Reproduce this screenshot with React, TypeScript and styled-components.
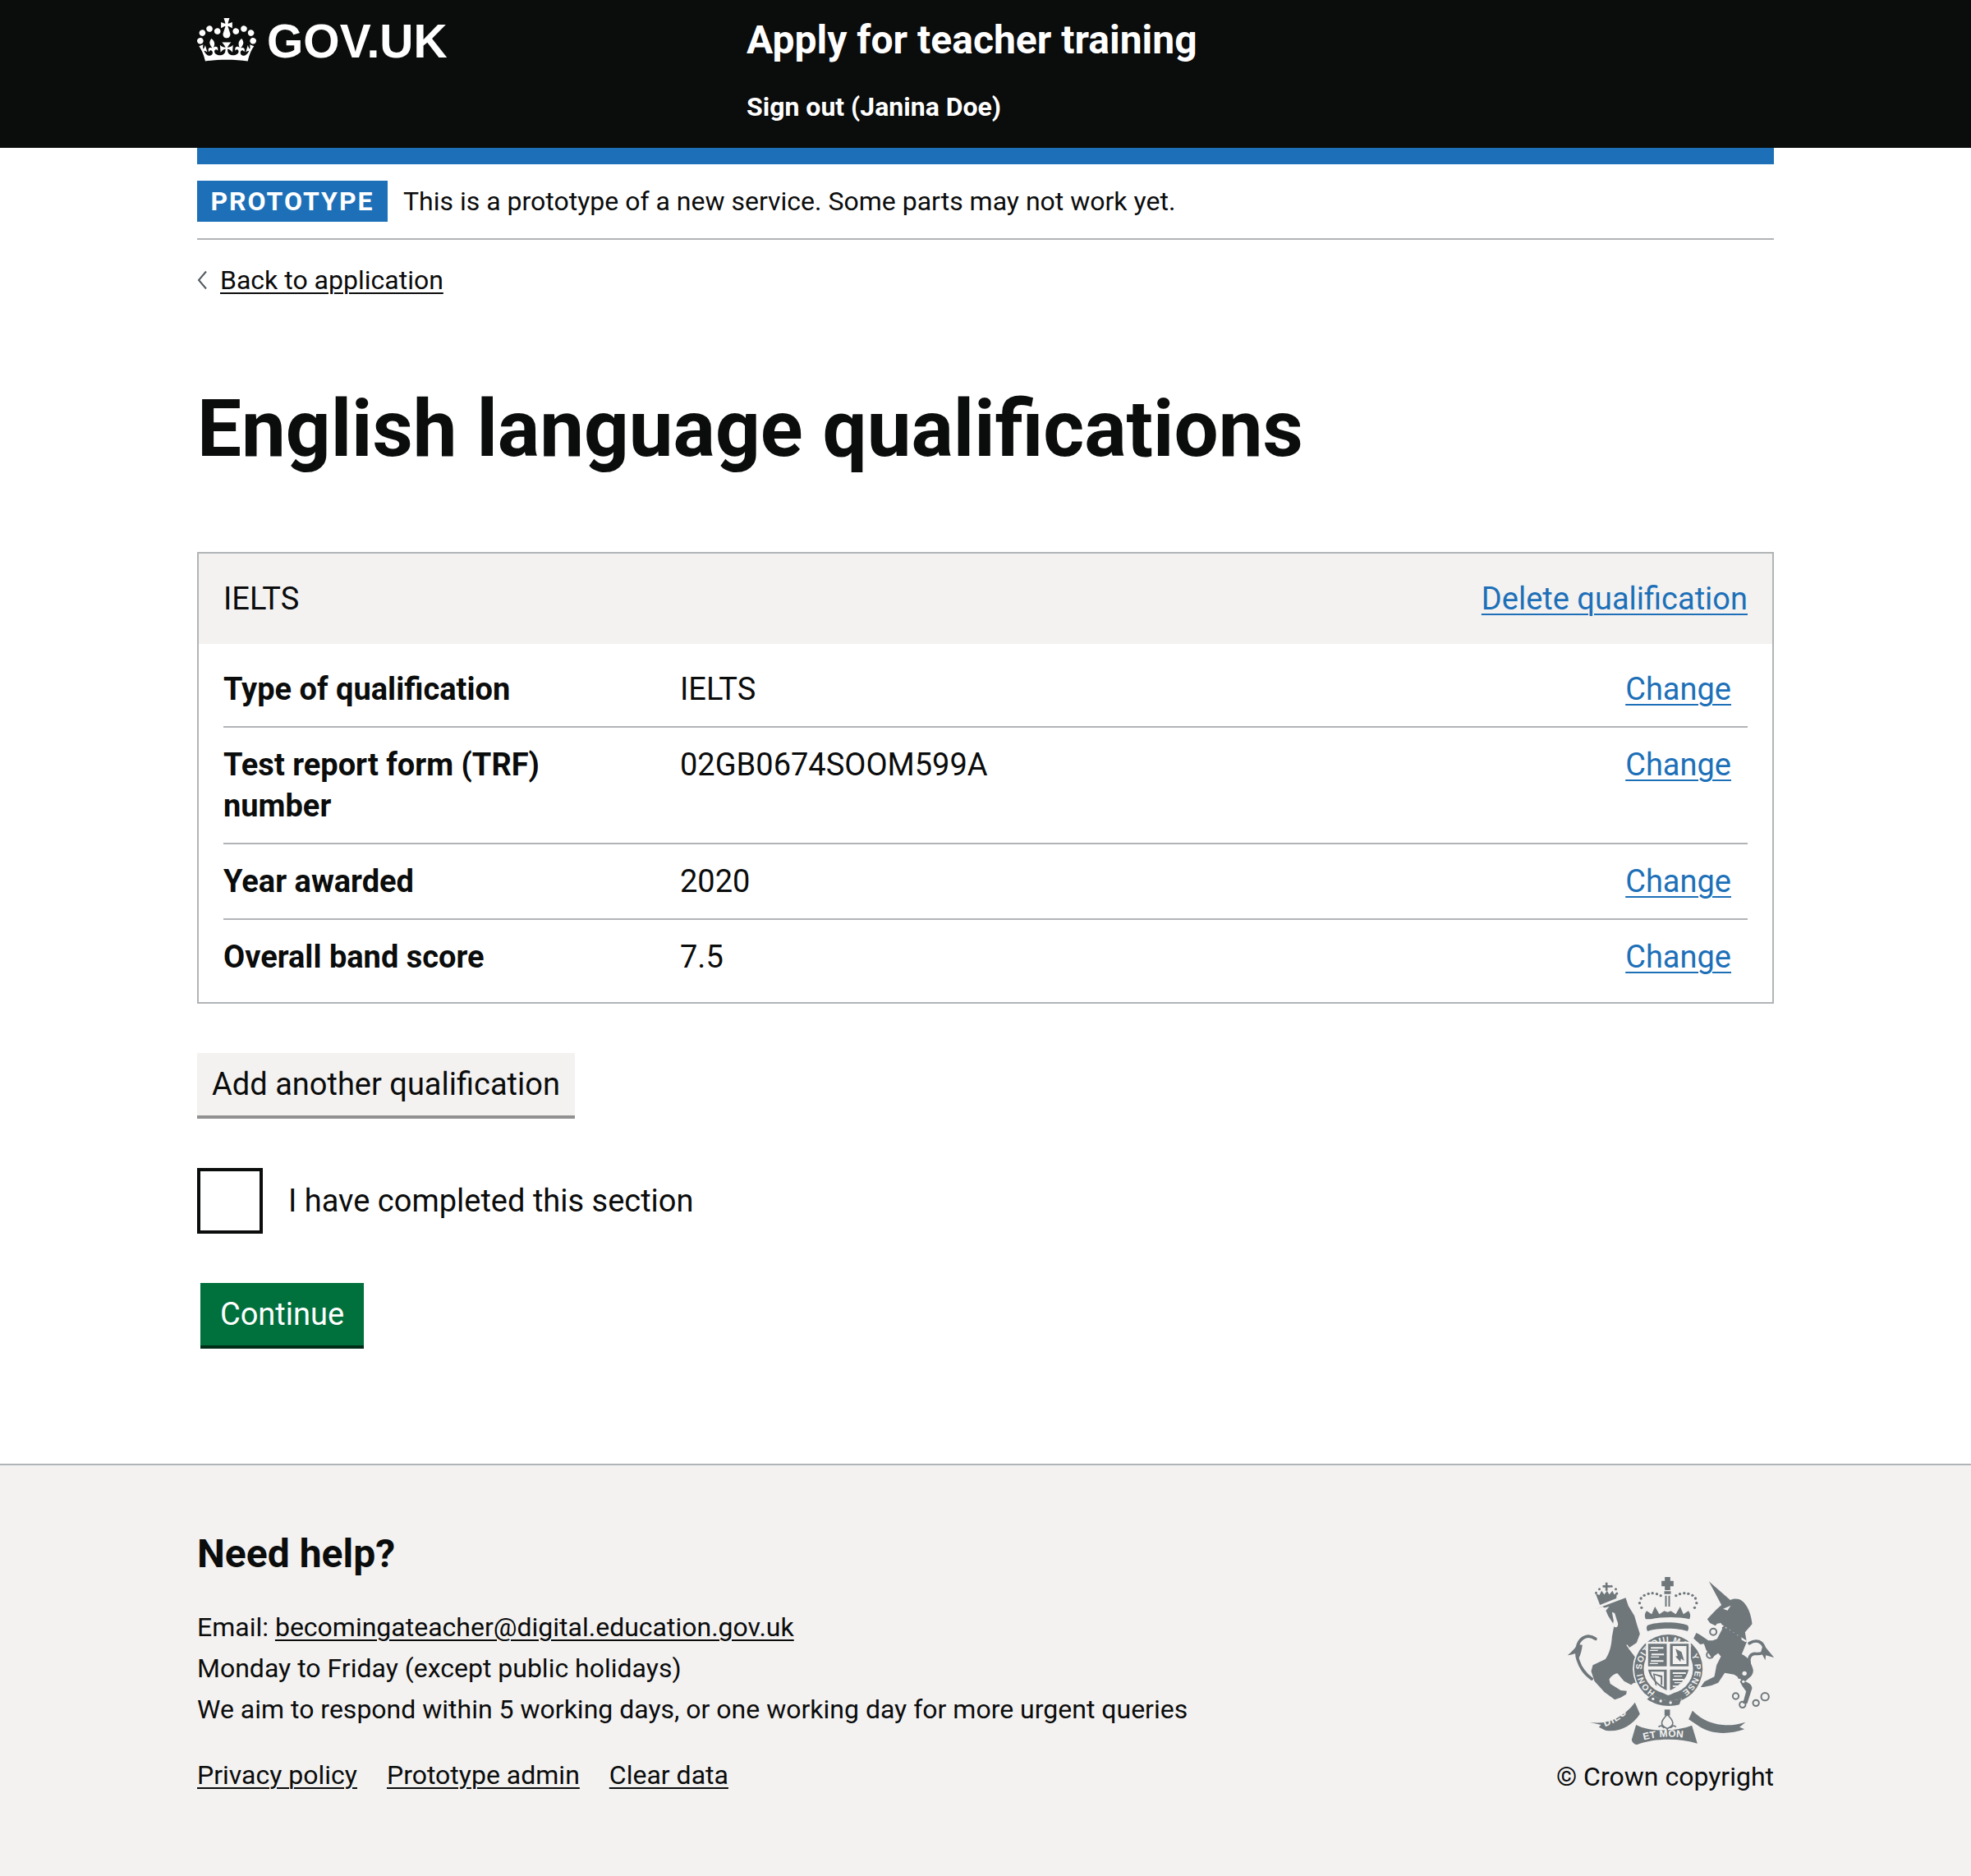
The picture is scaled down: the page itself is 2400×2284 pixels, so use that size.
import React from "react";
import styled, { createGlobalStyle } from "styled-components";

const FONT = `Roboto, "Noto Sans", Arial, sans-serif`;
const Global = createGlobalStyle`
  html, body { margin: 0; padding: 0; background: #fff; }
  body { font-family: ${FONT}; color: #0b0c0c; }
  * { box-sizing: border-box; }
`;
const Page = styled.div`height: 2284px; display: flex; flex-direction: column; overflow: hidden;`;
const Header = styled.header`height: 180px; background: #0b0c0c; color: #fff; flex: none;`;
const HeaderInner = styled.div`width: 1920px; margin: 0 auto; display: flex;`;
const LogoBlock = styled.div`width: 669px; display: flex; align-items: flex-start; padding-top: 22px; gap: 13px;`;
const Wordmark = styled.span`font-family: "Liberation Sans", Arial, sans-serif; font-weight: 700; font-size: 57px; line-height: 54px; margin-top: 1px;`;
const ServiceBlock = styled.div`display: flex; flex-direction: column; padding-top: 19px;`;
const ServiceName = styled.div`font-size: 48px; font-weight: 700; line-height: 60px;`;
const SignOut = styled.div`font-size: 32px; font-weight: 700; line-height: 40px; margin-top: 31px;`;
const Container = styled.div`width: 1920px; margin: 0 auto; flex: none;`;
const Phase = styled.div`border-top: 20px solid #1d70b8; border-bottom: 2px solid #b1b4b6; padding: 20px 0; display: flex; align-items: center; gap: 19px; height: 112px;`;
const Tag = styled.strong`background: #1d70b8; color: #fff; font-size: 32px; line-height: 50px; height: 50px; width: 232px; text-align: center; letter-spacing: 2px; font-weight: 700;`;
const PhaseText = styled.span`font-size: 32px; line-height: 50px;`;
const Back = styled.div`display: flex; align-items: center; gap: 16px; margin-top: 24px; height: 50px;`;
const BackLink = styled.a`font-size: 32px; line-height: 50px; color: #0b0c0c; text-decoration: underline; text-decoration-thickness: 2px; text-underline-offset: 4px;`;
const Title = styled.h1`font-size: 96px; line-height: 120px; font-weight: 700; margin: 96px 0 90px;`;
const Card = styled.section`border: 2px solid #b1b4b6;`;
const CardHead = styled.div`background: #f3f2f1; height: 110px; padding: 0 30px; display: flex; align-items: center; justify-content: space-between; font-size: 38px; line-height: 50px;`;
const CardBody = styled.dl`margin: 0; padding: 10px 30px;`;
const Row = styled.div`display: grid; grid-template-columns: 556px 1fr auto; padding: 20px 0; border-bottom: 2px solid #b1b4b6; &:last-child { border-bottom: none; }`;
const Key = styled.dt`font-size: 38px; line-height: 50px; font-weight: 700;`;
const Val = styled.dd`font-size: 38px; line-height: 50px; margin: 0;`;
const Action = styled.dd`margin: 0; padding-right: 20px;`;
const BlueLink = styled.a`font-size: 38px; line-height: 50px; color: #1d70b8; text-decoration: underline; text-decoration-thickness: 2px; text-underline-offset: 5px;`;
const AddButton = styled.button`display: block; margin-top: 60px; height: 80px; width: 460px; border: none; border-bottom: 4px solid #929191; background: #f3f2f1; color: #0b0c0c; font: 400 38px/50px ${FONT}; padding: 0;`;
const CheckRow = styled.label`display: flex; align-items: center; gap: 31px; margin-top: 60px; font-size: 38px; line-height: 50px;`;
const Box = styled.span`width: 80px; height: 80px; border: 4px solid #0b0c0c; background: #fff; flex: none;`;
const ContinueButton = styled.button`display: block; margin: 60px 0 140px 4px; width: 199px; height: 80px; border: none; border-bottom: 4px solid #002d18; background: #00703c; color: #fff; font: 400 38px/50px ${FONT}; padding: 0;`;
const Footer = styled.footer`flex: 1; background: #f3f2f1; border-top: 2px solid #b1b4b6;`;
const FooterInner = styled.div`width: 1920px; margin: 0 auto; padding-top: 78px; display: flex; justify-content: space-between;`;
const HelpCol = styled.div`display: flex; flex-direction: column;`;
const HelpTitle = styled.h2`font-size: 48px; line-height: 60px; font-weight: 700; margin: 0 0 34px;`;
const HelpLine = styled.p`font-size: 32px; line-height: 50px; margin: 0;`;
const DarkLink = styled.a`color: #0b0c0c; font-size: 32px; line-height: 50px; text-decoration: underline; text-decoration-thickness: 2px; text-underline-offset: 4px;`;
const FootLinks = styled.div`display: flex; gap: 36px; margin-top: 30px;`;
const ArmsCol = styled.div`display: flex; flex-direction: column; align-items: flex-end; padding-top: 58px;`;
const Copy = styled.div`font-size: 32px; line-height: 50px; margin-top: 14px;`;

const Crown = () => (
  <svg width="72" height="53" viewBox="0 0 132 97" fill="#fff" aria-hidden="true">
    <path fillRule="evenodd" d="M25 30.2c3.5 1.5 7.7-.2 9.1-3.7 1.5-3.6-.2-7.8-3.9-9.2-3.6-1.4-7.6.3-9.1 3.9-1.4 3.5.3 7.5 3.9 9zM9 39.5c3.6 1.5 7.8-.2 9.2-3.7 1.5-3.6-.2-7.8-3.9-9.1-3.6-1.5-7.6.2-9.1 3.8-1.4 3.5.3 7.5 3.8 9zM4.4 57.2c3.5 1.5 7.7-.2 9.1-3.8 1.5-3.6-.2-7.7-3.9-9.1-3.5-1.5-7.6.3-9.1 3.8-1.4 3.5.3 7.6 3.9 9.1zm38.3-21.4c3.5 1.5 7.7-.2 9.1-3.8 1.5-3.6-.2-7.7-3.9-9.1-3.6-1.5-7.6.3-9.1 3.8-1.3 3.6.4 7.7 3.9 9.1zm64.4-5.6c-3.6 1.5-7.8-.2-9.1-3.7-1.5-3.6.2-7.8 3.8-9.2 3.6-1.4 7.7.3 9.2 3.9 1.3 3.5-.4 7.5-3.9 9zm15.9 9.3c-3.6 1.5-7.7-.2-9.1-3.7-1.5-3.6.2-7.8 3.7-9.1 3.6-1.5 7.7.2 9.2 3.8 1.5 3.5-.3 7.5-3.8 9zm4.7 17.7c-3.6 1.5-7.8-.2-9.2-3.8-1.5-3.6.2-7.7 3.9-9.1 3.6-1.5 7.7.3 9.2 3.8 1.3 3.5-.4 7.6-3.9 9.1zM89.3 35.8c-3.6 1.5-7.8-.2-9.2-3.8-1.4-3.6.2-7.7 3.9-9.1 3.6-1.5 7.7.3 9.2 3.8 1.4 3.6-.3 7.7-3.9 9.1zM69.7 17.7l8.9 4.7V9.3l-8.9 2.8c-.2-.3-.5-.6-.9-.9L72.4 0H59.6l3.5 11.2c-.3.3-.6.5-.9.9l-8.8-2.8v13.1l8.8-4.7c.3.3.6.7.9.9l-5 15.4v.1c-.2.8-.4 1.6-.4 2.4 0 4.1 3.1 7.5 7 8.1h.2c.3 0 .7.1 1 .1.4 0 .7 0 1-.1h.2c4-.6 7.1-4.1 7.1-8.1 0-.8-.1-1.7-.4-2.4V34l-5.1-15.4c.4-.2.7-.6 1-.9zM66 92.8c16.9 0 32.8 1.1 47.1 3.2 4-16.9 8.9-26.7 14-33.5l-9.6-3.4c1 4.9 1.1 7.2 0 10.2-1.5-1.4-3-4.3-4.2-8.7L108.6 76c2.8-2 5-3.2 7.5-3.3-4.4 9.4-10 11.9-13.6 11.2-4.3-.8-6.3-4.6-5.6-7.9 1-4.7 5.7-5.9 8-.5 4.3-8.7-3-11.4-7.6-8.8 7.1-7.2 7.9-13.5 2.1-21.1-8 6.1-8.1 12.3-4.5 20.8-4.7-5.4-12.1-2.5-9.5 6.2 3.4-5.2 7.9-2 7.2 3.1-.6 4.3-6.4 7.8-13.5 7.2-10.3-.9-10.9-8-11.2-13.8 2.5-.5 7.1 1.8 11 7.3L80.2 60c-4.1 4.4-8 5.3-12.3 5.4 1.4-4.4 8-11.6 8-11.6H55.5s6.4 7.2 7.9 11.6c-4.2-.1-8-1-12.3-5.4l1.4 16.4c3.9-5.5 8.5-7.7 10.9-7.3-.3 5.8-.9 12.8-11.1 13.8-7.2.6-12.9-2.9-13.5-7.2-.7-5 3.8-8.3 7.1-3.1 2.7-8.7-4.6-11.6-9.4-6.2 3.7-8.5 3.6-14.7-4.6-20.8-5.8 7.6-5 13.9 2.2 21.1-4.7-2.6-11.9.1-7.7 8.8 2.3-5.5 7.1-4.2 8.1.5.7 3.3-1.3 7.1-5.7 7.9-3.5.7-9-1.8-13.5-11.2 2.5.1 4.7 1.3 7.5 3.3l-4.7-15.4c-1.2 4.4-2.7 7.2-4.3 8.7-1.1-3-.9-5.3 0-10.2l-9.5 3.4c5 6.9 9.9 16.7 14 33.5 14.8-2.1 30.8-3.2 47.7-3.2z" />
  </svg>
);

const Chevron = () => (
  <svg width="12" height="24" viewBox="0 0 12 24" fill="none" stroke="#505a5f" strokeWidth="2" aria-hidden="true">
    <path d="M11 1.5 2 12l9 10.5" />
  </svg>
);

const Arms = () => {
  const g = "#6f777b";
  const bg = "#f3f2f1";
  const dots: [number, number][] = [[342, 172], [335, 155], [340, 138], [352, 127], [367, 121], [382, 119], [398, 122], [412, 128], [468, 128], [482, 122], [498, 119], [513, 121], [528, 127], [539, 138], [543, 155], [536, 172]];
  const rings: [number, number, number][] = [[604, 260, 12], [592, 344, 12], [727, 370, 10], [686, 495, 11], [711, 526, 11], [760, 520, 11], [793, 497, 14]];
  return (
    <svg width="252" height="204" viewBox="70 60 755 612" aria-hidden="true">
      <defs>
        <path id="garter" d="M392 480 A97 97 0 1 1 488 480" />
        <path id="scrollL" d="M208 606 Q262 590 312 535" />
        <path id="scrollM" d="M350 656 Q435 634 525 652" />
        <path id="scrollR" d="M552 540 Q600 580 672 612" />
      </defs>

      {/* St Edward's crown */}
      <g fill={g}>
        <path d="M427 60h20v14h12v20h-12v14h-20V94h-12V74h12z" />
        <path d="M425 112h24v10h-24zM428 128h6v40h-6zM440 128h6v40h-6z" />
        <path d="M357 214c-6-14-2-24 4-30l18 12 12-28 16 28 18-12 12 4 12-4 18 12 16-28 12 28 18-12c6 6 10 16 4 30-36-9-104-9-140 0z" />
        <path d="M364 236c36-14 110-14 146 0 5 6 5 14 0 22-36-13-110-13-146 0-5-8-5-16 0-22z" />
        {dots.map(([x, y]) => <circle key={`${x}-${y}`} cx={x} cy={y} r="5" />)}
      </g>

      {/* Lion's crown */}
      <g fill={g}>
        <path d="M200 90h10V80h8v10h10v8h-10v12h-8V98h-10z" />
        <path d="M180 136l-6-16 14 6 8-16 10 14 10-14 8 14 12-14 6 14 10-6-2 20-60 24z" />
        <circle cx="176" cy="118" r="4.5" /><circle cx="188" cy="104" r="4.5" />
        <circle cx="232" cy="94" r="4.5" /><circle cx="248" cy="104" r="4.5" /><circle cx="252" cy="120" r="4.5" />
      </g>

      {/* Lion */}
      <path fill="none" stroke={g} strokeWidth="11" strokeLinecap="round" d="M174 286C150 268 122 276 110 306c-6 16-8 34 0 58 8 26 28 52 50 68" />
      <path fill={g} d="M110 306c-12 14-22 26-38 40 14-2 26-6 38-10l2 22c8-14 12-34 14-50z" />
      <path fill={g} d="M172 178l36-14 38-14 38-14 10 30 22 36 10 34 10 32-12 32-30 20 34 44 8 14-20 6-6 12 10 18 22 10 18 8-14 6-6 12-26-4-10 8-26-14-24-28c-14 2-24 12-30 22l4 16 38 24 22 2-2 12-20 12-22 8-38-28-36-40-12-36 6-22 46-22c16-24 22-50 24-82l8-42-22-34-12-28-8-6z" />
      <path fill={bg} d="M190 176l34-8-12 14zM234 188l10 4 8 26c6 12 6 24-4 26-10 0-12-12-8-24z" />
      <path fill="none" stroke={bg} strokeWidth="4" d="M288 308l58 76" />

      {/* Unicorn */}
      <path fill="none" stroke={g} strokeWidth="11" strokeLinecap="round" d="M736 302C762 286 782 296 790 318c8 22-16 24-36 22-18 2-26 24-12 52 6 14 0 26-16 36" />
      <path fill={g} d="M786 306l40 48-30-8-2 18-16-30z" />
      <path fill={g} d="M588 76l78 68c14-6 30-6 42 2 22 16 36 54 38 86l-26 30 6 36-18 44c18 8 34 24 36 46 2 22-6 40-24 54 14 4 24 10 26 24l-18 56-16 0 12-44-14-20-18-34-12-8-34-6-24 36-24 10-30 6-10 0 14-20 36-18 8-42 16-32-10-12-14 10-8 10-22-32-8-22-14 2-24-22 10-20 12 6 32 22h16l16-6 22-42-8-16-14 2-6 8-20-10-10-14 32-34 20-18z" />
      <path fill={bg} d="M640 176l28-12-12 18zM622 238l100 60 6-4-98-64z" />
      <path fill={g} d="M636 244l10-8 4 12 12-6 2 14 12-6 2 14 14-4 0 14 12-2 4 14-4 4-68-42z" />
      <g fill="none" stroke={g} strokeWidth="6">
        {rings.map(([x, y, r]) => <circle key={`${x}-${y}`} cx={x} cy={y} r={r} />)}
      </g>
      <circle cx="718" cy="412" r="8" fill={bg} />
      <circle cx="700" cy="436" r="5" fill={bg} />
      <circle cx="714" cy="442" r="5" fill={bg} />

      {/* Garter and shield */}
      <circle cx="440" cy="395" r="130" fill={bg} />
      <circle cx="440" cy="395" r="125" fill={g} />
      <text fontFamily="Liberation Sans, Arial, sans-serif" fontWeight="700" fontSize="31" fill={bg}>
        <textPath href="#garter" textLength="505" lengthAdjust="spacing">HONI SOIT QUI MAL Y PENSE</textPath>
      </text>
      <circle cx="440" cy="395" r="90" fill={bg} />
      <path fill={g} d="M352 290h176v100c0 50-48 92-88 104-40-12-88-54-88-104z" opacity="0" />
      <path fill={bg} d="M358 296h164v100c0 44-44 84-82 96-38-12-82-52-82-96z" />
      <path fill={g} d="M366 304h68v82h-68zM446 304h68v82h-68zM366 398h68v76c-28-14-60-38-68-76zM446 398h68c-8 38-40 62-68 76z" />
      <g fill={bg}>
        <path d="M376 316h46v6h-46zM372 326h30v4h-30zM378 340h46v6h-46zM376 350h30v4h-30zM376 364h46v6h-46zM372 374h30v4h-30z" />
        <path d="M456 312h50v66h-50zM376 406h48v56c-22-12-42-30-48-56zM456 408h48v6h-48zM460 420h30v4h-30zM456 432h40v6h-40zM462 444h26v4h-26zM456 456h22v5h-22z" />
      </g>
      <path fill={g} d="M466 322l22 12 10 32-12-8-2 12-18-20 8-2z" />
      <path fill={g} d="M384 412l34 8 0 34-6 0 0-28-22-8 8 40-6-4z" />

      {/* Buckle */}
      <path fill={bg} d="M362 506l16-18c36 24 70 28 112 16l-10 22c-44 10-84 2-118-20z" />
      <path fill={g} d="M362 506l18-16c34 22 72 26 108 14l-8 22c-40 10-84 4-118-20zM376 500z" />
      <circle cx="412" cy="513" r="5" fill={bg} /><circle cx="448" cy="519" r="5" fill={bg} /><circle cx="384" cy="505" r="5" fill={bg} />

      {/* Motto */}
      <g fill={g}>
        <path d="M152 590c60 10 120-12 166-72l18 42c-30 46-78 68-126 60l-24-12 8-8z" />
        <path d="M528 548c50 50 120 66 194 42l-22 18 18 8c-60 22-126 18-168-12l-36-24z" />
        <path d="M322 600c50 26 138 26 204 2l20 66c-70-20-156-20-220 4-8 0-18-6-20-18z" />
        <path d="M426 544h20v22h-20z" />
        <path fill="none" stroke={g} strokeWidth="5" d="M436 562c-8 10-20 18-20 32 0 12 14 16 20 20 6-4 20-8 20-20 0-14-12-22-20-32zM436 614l0 16M404 608c8-8 16-4 20 4M468 608c-8-8-16-4-20 4" />
      </g>
      <g fontFamily="Liberation Sans, Arial, sans-serif" fontWeight="700" fontSize="36" fill={bg}>
        <text letterSpacing="3"><textPath href="#scrollL">DIEU</textPath></text>
        <text letterSpacing="1"><textPath href="#scrollM">ET MON</textPath></text>
        <text letterSpacing="3"><textPath href="#scrollR">DROIT</textPath></text>
      </g>
    </svg>
  );
};

const rows: { key: React.ReactNode; value: string }[] = [
  { key: "Type of qualification", value: "IELTS" },
  { key: <>Test report form (TRF)<br />number</>, value: "02GB0674SOOM599A" },
  { key: "Year awarded", value: "2020" },
  { key: "Overall band score", value: "7.5" },
];

export default function App() {
  return (
    <Page>
      <Global />
      <Header>
        <HeaderInner>
          <LogoBlock>
            <Crown />
            <Wordmark>GOV.UK</Wordmark>
          </LogoBlock>
          <ServiceBlock>
            <ServiceName>Apply for teacher training</ServiceName>
            <SignOut>Sign out (Janina Doe)</SignOut>
          </ServiceBlock>
        </HeaderInner>
      </Header>
      <Container>
        <Phase>
          <Tag>PROTOTYPE</Tag>
          <PhaseText>This is a prototype of a new service. Some parts may not work yet.</PhaseText>
        </Phase>
        <Back>
          <Chevron />
          <BackLink href="#">Back to application</BackLink>
        </Back>
        <Title>English language qualifications</Title>
        <Card>
          <CardHead>
            <span>IELTS</span>
            <BlueLink href="#">Delete qualification</BlueLink>
          </CardHead>
          <CardBody>
            {rows.map((r, i) => (
              <Row key={i}>
                <Key>{r.key}</Key>
                <Val>{r.value}</Val>
                <Action><BlueLink href="#">Change</BlueLink></Action>
              </Row>
            ))}
          </CardBody>
        </Card>
        <AddButton>Add another qualification</AddButton>
        <CheckRow><Box />I have completed this section</CheckRow>
        <ContinueButton>Continue</ContinueButton>
      </Container>
      <Footer>
        <FooterInner>
          <HelpCol>
            <HelpTitle>Need help?</HelpTitle>
            <HelpLine>Email: <DarkLink href="#">becomingateacher@digital.education.gov.uk</DarkLink></HelpLine>
            <HelpLine>Monday to Friday (except public holidays)</HelpLine>
            <HelpLine>We aim to respond within 5 working days, or one working day for more urgent queries</HelpLine>
            <FootLinks>
              <DarkLink href="#">Privacy policy</DarkLink>
              <DarkLink href="#">Prototype admin</DarkLink>
              <DarkLink href="#">Clear data</DarkLink>
            </FootLinks>
          </HelpCol>
          <ArmsCol>
            <Arms />
            <Copy>© Crown copyright</Copy>
          </ArmsCol>
        </FooterInner>
      </Footer>
    </Page>
  );
}
